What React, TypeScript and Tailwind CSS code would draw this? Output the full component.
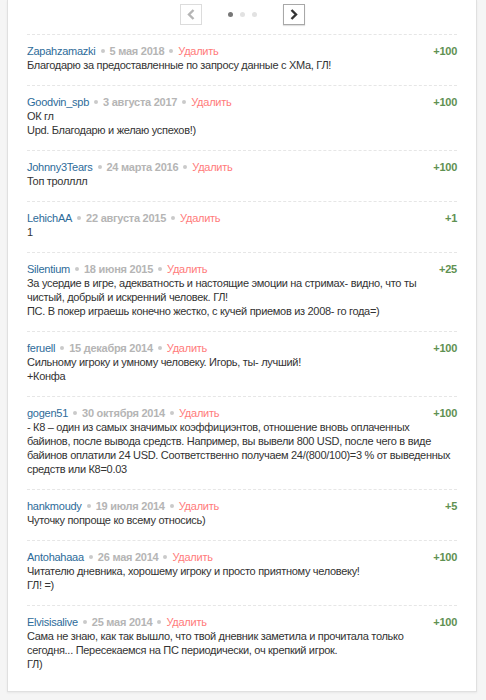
import React from "react";

type Item = { name: string; date: string; points: string; text: string };

const items: Item[] = [
  { name: "Zapahzamazki", date: "5 мая 2018", points: "+100", text: "Благодарю за предоставленные по запросу данные с ХМа, ГЛ!" },
  { name: "Goodvin_spb", date: "3 августа 2017", points: "+100", text: "ОК гл\nUpd. Благодарю и желаю успехов!)" },
  { name: "Johnny3Tears", date: "24 марта 2016", points: "+100", text: "Топ тролллл" },
  { name: "LehichAA", date: "22 августа 2015", points: "+1", text: "1" },
  {
    name: "Silentium",
    date: "18 июня 2015",
    points: "+25",
    text: "За усердие в игре, адекватность и настоящие эмоции на стримах- видно, что ты\nчистый, добрый и искренний человек. ГЛ!\nПС. В покер играешь конечно жестко, с кучей приемов из 2008- го года=)",
  },
  { name: "feruell", date: "15 декабря 2014", points: "+100", text: "Сильному игроку и умному человеку. Игорь, ты- лучший!\n+Конфа" },
  {
    name: "gogen51",
    date: "30 октября 2014",
    points: "+100",
    text: "- К8 – один из самых значимых коэффициэнтов, отношение вновь оплаченных\nбайинов, после вывода средств. Например, вы вывели 800 USD, после чего в виде\nбайинов оплатили 24 USD. Соответственно получаем 24/(800/100)=3 % от выведенных\nсредств или К8=0.03",
  },
  { name: "hankmoudy", date: "19 июля 2014", points: "+5", text: "Чуточку попроще ко всему относись)" },
  { name: "Antohahaaa", date: "26 мая 2014", points: "+100", text: "Читателю дневника, хорошему игроку и просто приятному человеку!\nГЛ! =)" },
  {
    name: "Elvisisalive",
    date: "25 мая 2014",
    points: "+100",
    text: "Сама не знаю, как так вышло, что твой дневник заметила и прочитала только\nсегодня... Пересекаемся на ПС периодически, оч крепкий игрок.\nГЛ)",
  },
];

function Dot() {
  return <span className="mx-[5px] inline-block h-[4px] w-[4px] rounded-full bg-[#cacaca] align-middle" />;
}

export default function App() {
  return (
    <div className="min-h-[700px] bg-[#f5f5f5] pl-[7px] pr-[9px]" style={{ fontFamily: '"Liberation Sans", Arial, sans-serif' }}>
      <div className="border-x border-b border-[#e0e0e0] bg-white px-[19px] pb-[7px] shadow-[0_1px_2px_rgba(0,0,0,0.06)]">
        <div className="flex h-[34px] items-start justify-center pt-[4px]">
          <div className="flex items-center">
            <button className="flex h-[21px] w-[22px] items-center justify-center border border-[#dcdcdc] bg-white">
              <svg width="8" height="11" viewBox="0 0 8 11">
                <polyline points="6.5,1 2,5.5 6.5,10" fill="none" stroke="#b5b5b5" strokeWidth="2.4" />
              </svg>
            </button>
            <div className="mx-[26px] flex items-center gap-[7px]">
              <span className="h-[5px] w-[5px] rounded-full bg-[#777]" />
              <span className="h-[5px] w-[5px] rounded-full bg-[#e2e2e2]" />
              <span className="h-[5px] w-[5px] rounded-full bg-[#e2e2e2]" />
            </div>
            <button className="flex h-[21px] w-[22px] items-center justify-center border border-[#a8a8a8] bg-white shadow-[0_1px_1px_rgba(0,0,0,0.12)]">
              <svg width="8" height="11" viewBox="0 0 8 11">
                <polyline points="1.5,1 6,5.5 1.5,10" fill="none" stroke="#333" strokeWidth="2.4" />
              </svg>
            </button>
          </div>
        </div>
        {items.map((it, i) => (
          <div key={i} className="border-t border-dashed border-[#e6e6e6] pt-[9px] pb-[13px]">
            <div className="flex h-[14px] items-center justify-between text-[11px] leading-[14px] tracking-[-0.25px]">
              <div className="flex items-center">
                <span className="text-[#2d6b99]">{it.name}</span>
                <Dot />
                <span className="font-bold text-[#b5b5b5]">{it.date}</span>
                <Dot />
                <span className="text-[#ff7b7b]">Удалить</span>
              </div>
              <span className="font-bold text-[#5f9152]">{it.points}</span>
            </div>
            <div className="whitespace-pre text-[11px] leading-[14px] tracking-[-0.3px] text-[#333]">{it.text}</div>
          </div>
        ))}
      </div>
    </div>
  );
}
